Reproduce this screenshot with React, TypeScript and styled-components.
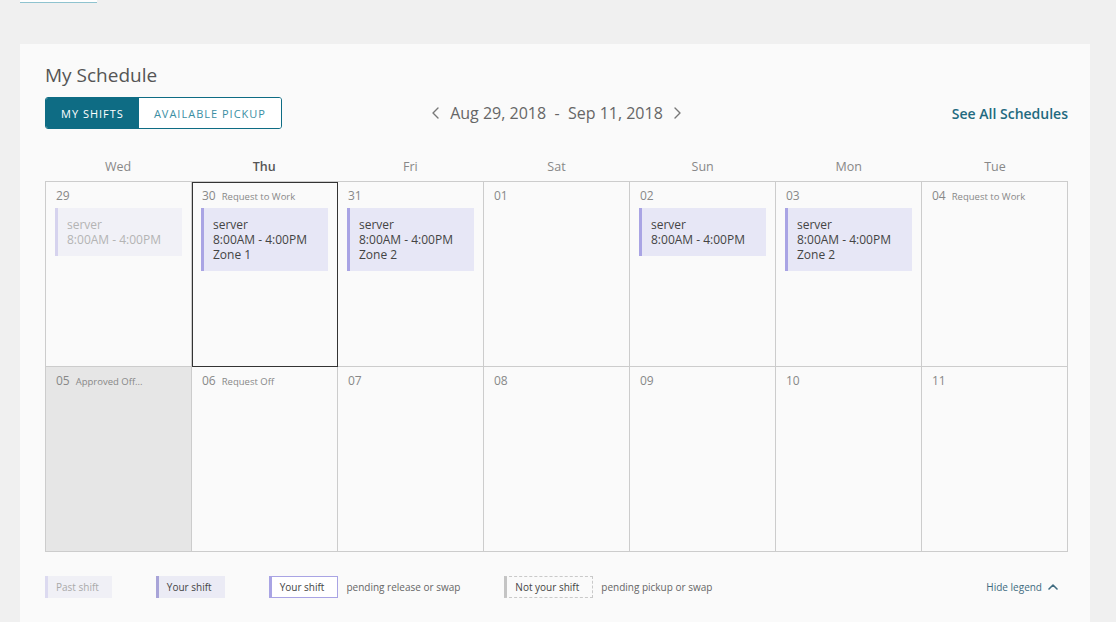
import React from "react";
import styled, { createGlobalStyle, css } from "styled-components";

const GlobalStyle = createGlobalStyle`
  html, body {
    margin: 0;
    padding: 0;
    background: #f0f0f0;
    font-family: "Open Sans", "Liberation Sans", Arial, sans-serif;
    overflow: hidden;
  }
`;

const TEAL = "#0e6c84";

type ShiftKind = "past" | "mine";

interface Shift {
  role: string;
  time: string;
  zone?: string;
  kind: ShiftKind;
}

interface Day {
  date: string;
  label?: string;
  shift?: Shift;
  approvedOff?: boolean;
  selected?: boolean;
}

const weekDays = ["Wed", "Thu", "Fri", "Sat", "Sun", "Mon", "Tue"];

const days: Day[] = [
  { date: "29", shift: { role: "server", time: "8:00AM - 4:00PM", kind: "past" } },
  {
    date: "30",
    label: "Request to Work",
    selected: true,
    shift: { role: "server", time: "8:00AM - 4:00PM", zone: "Zone 1", kind: "mine" },
  },
  { date: "31", shift: { role: "server", time: "8:00AM - 4:00PM", zone: "Zone 2", kind: "mine" } },
  { date: "01" },
  { date: "02", shift: { role: "server", time: "8:00AM - 4:00PM", kind: "mine" } },
  { date: "03", shift: { role: "server", time: "8:00AM - 4:00PM", zone: "Zone 2", kind: "mine" } },
  { date: "04", label: "Request to Work" },
  { date: "05", label: "Approved Off...", approvedOff: true },
  { date: "06", label: "Request Off" },
  { date: "07" },
  { date: "08" },
  { date: "09" },
  { date: "10" },
  { date: "11" },
];

const Page = styled.div`
  width: 1116px;
  height: 622px;
  overflow: hidden;
`;

const TopStub = styled.div`
  margin-left: 20px;
  width: 77px;
  height: 2px;
  background: #ffffff;
  border-bottom: 1px solid #8fc3cf;
`;

const Card = styled.section`
  margin: 41px 0 0 20px;
  width: 1070px;
  box-sizing: border-box;
  padding: 18px 22px 30px 25px;
  background: #fafafa;
  min-height: 600px;
`;

const Title = styled.h1`
  margin: 0 0 9px;
  font-size: 19px;
  font-weight: 400;
  color: #555;
  line-height: 26px;
`;

const Toolbar = styled.div`
  display: grid;
  grid-template-columns: 1fr auto 1fr;
  align-items: center;
`;

const Tabs = styled.div`
  display: flex;
  justify-self: start;
  border: 1px solid ${TEAL};
  border-radius: 3px;
  overflow: hidden;
  height: 30px;
`;

const Tab = styled.button<{ $active?: boolean }>`
  border: none;
  margin: 0;
  font-family: inherit;
  font-size: 11px;
  letter-spacing: 1px;
  font-weight: 400;
  padding: 0 15px;
  cursor: pointer;
  ${({ $active }) =>
    $active
      ? css`
          background: ${TEAL};
          color: #fff;
        `
      : css`
          background: #fff;
          color: #3b8ea3;
        `}
`;

const DateNav = styled.div`
  display: flex;
  align-items: center;
  gap: 4px;
  font-size: 16px;
  color: #666;
`;

const Arrow = styled.button`
  border: none;
  background: none;
  padding: 0 2px;
  color: #777;
  display: flex;
  align-items: center;
  cursor: pointer;
`;

const RangeText = styled.span`
  padding: 0 4px;
`;

const SeeAll = styled.a`
  justify-self: end;
  font-size: 14px;
  font-weight: 600;
  color: #1f6a80;
  text-decoration: none;
  cursor: pointer;
`;

const WeekHeader = styled.div`
  display: grid;
  grid-template-columns: repeat(7, 1fr);
  margin-top: 22px;
  height: 30px;
  align-items: center;
`;

const WeekDay = styled.div<{ $today?: boolean }>`
  text-align: center;
  font-size: 12.5px;
  color: ${({ $today }) => ($today ? "#555" : "#888")};
  font-weight: ${({ $today }) => ($today ? 600 : 400)};
`;

const Grid = styled.div`
  display: grid;
  grid-template-columns: repeat(7, 1fr);
  grid-auto-rows: 185px;
  border-top: 1px solid #ccc;
  border-left: 1px solid #ccc;
`;

const Cell = styled.div<{ $off?: boolean; $selected?: boolean }>`
  position: relative;
  border-right: 1px solid #ccc;
  border-bottom: 1px solid #ccc;
  padding: 5px 9px 0;
  background: ${({ $off }) => ($off ? "#e6e6e6" : "#fafafa")};
  ${({ $selected }) =>
    $selected &&
    css`
      outline: 1px solid #333;
      outline-offset: -1px;
      z-index: 1;
    `}
`;

const CellHead = styled.div`
  display: flex;
  align-items: baseline;
  gap: 6px;
  height: 18px;
  padding-left: 1px;
  margin-bottom: 3px;
`;

const DateNum = styled.span`
  font-size: 12px;
  color: #888;
`;

const CellLabel = styled.span`
  font-size: 9.5px;
  color: #888;
`;

const ShiftBlock = styled.div<{ $kind: ShiftKind }>`
  border-left: 3px solid ${({ $kind }) => ($kind === "past" ? "#d6d3ee" : "#a9a4e4")};
  background: ${({ $kind }) => ($kind === "past" ? "#f1f1f7" : "#e7e7f6")};
  color: ${({ $kind }) => ($kind === "past" ? "#b4b4b4" : "#444")};
  padding: 9px;
  font-size: 12px;
  line-height: 15px;
`;

const Legend = styled.div`
  display: flex;
  align-items: center;
  margin-top: 24px;
  height: 22px;
`;

const LegendItem = styled.div`
  display: flex;
  align-items: center;
  gap: 8px;
  margin-right: 44px;
`;

type ChipKind = "past" | "mine" | "pending" | "other";

const chipStyles: Record<ChipKind, ReturnType<typeof css>> = {
  past: css`
    border-left: 3px solid #dcdaf0;
    background: #f0f0f6;
    color: #aaa;
  `,
  mine: css`
    border-left: 3px solid #a8a4d8;
    background: #ebebf5;
    color: #444;
  `,
  pending: css`
    border: 1px solid #a9a4e4;
    border-left: 3px solid #a9a4e4;
    background: #fff;
    color: #444;
  `,
  other: css`
    border: 1px dashed #c9c9c9;
    border-left: 3px solid #c4c4c4;
    background: #fafafa;
    color: #444;
  `,
};

const Chip = styled.span<{ $kind: ChipKind }>`
  display: inline-flex;
  align-items: center;
  height: 22px;
  box-sizing: border-box;
  padding: 0 13px 0 8px;
  font-size: 10px;
  ${({ $kind }) => chipStyles[$kind]}
`;

const Note = styled.span`
  font-size: 10px;
  color: #666;
`;

const HideLegend = styled.button`
  margin-left: auto;
  margin-right: 10px;
  border: none;
  background: none;
  font-family: inherit;
  font-size: 10px;
  color: #3f6b80;
  display: flex;
  align-items: center;
  gap: 6px;
  padding: 0;
  cursor: pointer;
`;

const Chevron = ({ dir }: { dir: "left" | "right" | "up" }) => {
  const d = dir === "left" ? "M7 1L2 6l5 5" : dir === "right" ? "M2 1l5 5-5 5" : "M1 6l4-4 4 4";
  const w = dir === "up" ? 10 : 9;
  const h = dir === "up" ? 8 : 12;
  return (
    <svg width={w} height={h} viewBox={`0 0 ${w} ${h}`} fill="none">
      <path d={d} stroke="currentColor" strokeWidth={dir === "up" ? 1.6 : 1.4} strokeLinecap="round" strokeLinejoin="round" />
    </svg>
  );
};

export default function App() {
  return (
    <Page>
      <GlobalStyle />
      <TopStub />
      <Card>
        <Title>My Schedule</Title>
        <Toolbar>
          <Tabs>
            <Tab $active>MY SHIFTS</Tab>
            <Tab>AVAILABLE PICKUP</Tab>
          </Tabs>
          <DateNav>
            <Arrow aria-label="Previous">
              <Chevron dir="left" />
            </Arrow>
            <RangeText>Aug 29, 2018&nbsp;&nbsp;-&nbsp;&nbsp;Sep 11, 2018</RangeText>
            <Arrow aria-label="Next">
              <Chevron dir="right" />
            </Arrow>
          </DateNav>
          <SeeAll>See All Schedules</SeeAll>
        </Toolbar>

        <WeekHeader>
          {weekDays.map((d) => (
            <WeekDay key={d} $today={d === "Thu"}>
              {d}
            </WeekDay>
          ))}
        </WeekHeader>

        <Grid>
          {days.map((day) => (
            <Cell key={day.date} $off={day.approvedOff} $selected={day.selected}>
              <CellHead>
                <DateNum>{day.date}</DateNum>
                {day.label && <CellLabel>{day.label}</CellLabel>}
              </CellHead>
              {day.shift && (
                <ShiftBlock $kind={day.shift.kind}>
                  <div>{day.shift.role}</div>
                  <div>{day.shift.time}</div>
                  {day.shift.zone && <div>{day.shift.zone}</div>}
                </ShiftBlock>
              )}
            </Cell>
          ))}
        </Grid>

        <Legend>
          <LegendItem>
            <Chip $kind="past">Past shift</Chip>
          </LegendItem>
          <LegendItem>
            <Chip $kind="mine">Your shift</Chip>
          </LegendItem>
          <LegendItem>
            <Chip $kind="pending">Your shift</Chip>
            <Note>pending release or swap</Note>
          </LegendItem>
          <LegendItem>
            <Chip $kind="other">Not your shift</Chip>
            <Note>pending pickup or swap</Note>
          </LegendItem>
          <HideLegend>
            Hide legend
            <Chevron dir="up" />
          </HideLegend>
        </Legend>
      </Card>
    </Page>
  );
}
